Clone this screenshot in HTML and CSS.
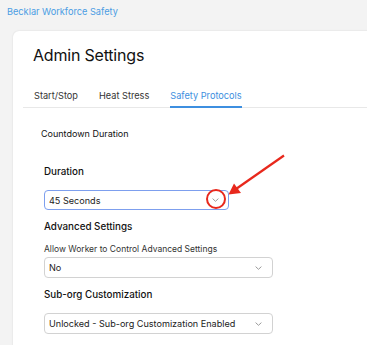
FILE: index.html
```html
<!DOCTYPE html>
<html>
<head>
<meta charset="utf-8">
<link rel="stylesheet" href="styles.css">
</head>
<body>
<div class="app">
  <header class="brand">Becklar Workforce Safety</header>
  <main class="card">
    <h1 class="title">Admin Settings</h1>
    <nav class="tabs">
      <span class="tab">Start/Stop</span>
      <span class="tab">Heat Stress</span>
      <span class="tab active">Safety Protocols</span>
    </nav>
    <section class="panel">
      <div class="section-title">Countdown Duration</div>
      <div class="form">
        <div class="label-lg">Duration</div>
        <div class="select focused short">
          <span>45 Seconds</span>
          <svg class="chev" width="7" height="4" viewBox="0 0 7 4"><path d="M0.6 0.6 L3.5 3.3 L6.4 0.6" fill="none" stroke="#9a9a9a" stroke-width="1"/></svg>
          <span class="ring"></span>
        </div>
        <div class="label-lg g10">Advanced Settings</div>
        <div class="label-sm">Allow Worker to Control Advanced Settings</div>
        <div class="select g2">
          <span>No</span>
          <svg class="chev" width="7" height="4" viewBox="0 0 7 4"><path d="M0.6 0.6 L3.5 3.3 L6.4 0.6" fill="none" stroke="#9a9a9a" stroke-width="1"/></svg>
        </div>
        <div class="label-lg g10">Sub-org Customization</div>
        <div class="select g11">
          <span>Unlocked - Sub-org Customization Enabled</span>
          <svg class="chev" width="7" height="4" viewBox="0 0 7 4"><path d="M0.6 0.6 L3.5 3.3 L6.4 0.6" fill="none" stroke="#9a9a9a" stroke-width="1"/></svg>
        </div>
      </div>
    </section>
  </main>
  <svg class="arrow" width="367" height="345" viewBox="0 0 367 345">
    <line x1="284" y1="155.5" x2="236" y2="189" stroke="#e8281c" stroke-width="2.2"/>
    <polygon points="228.5,194.5 234,183.5 241,193" fill="#e8281c"/>
  </svg>
</div>
</body>
</html>
```
FILE: styles.css
```css
* { box-sizing: border-box; }
html, body { margin: 0; padding: 0; }
body {
  background: #f3f3f3;
  font-family: Inter, "Noto Sans", sans-serif;
  color: #1a1a1a;
  width: 367px;
  height: 345px;
  overflow: hidden;
}
.app { position: relative; width: 367px; height: 345px; }
.brand {
  color: #4b9de3;
  font-size: 9.2px;
  padding: 6px 0 0 7px;
  height: 31px;
  line-height: 12px;
}
.card {
  margin-left: 13px;
  width: 420px;
  height: 340px;
  background: #fff;
  border-radius: 6px;
  box-shadow: 0 0 2px rgba(0,0,0,0.12);
  padding: 14px 0 0 10px;
}
.title {
  margin: 0 0 0 10px;
  font-size: 16px;
  font-weight: 400;
  letter-spacing: -0.2px;
  line-height: 20px;
  color: #111;
}
.tabs {
  display: flex;
  gap: 21px;
  margin-top: 25px;
  padding-left: 11px;
  border-bottom: 1px solid #e8e8e8;
  font-size: 9.2px;
  color: #333;
}
.tab { padding-bottom: 4px; line-height: 12px; border-bottom: 2px solid transparent; margin-bottom: -1px; }
.tab.active {
  color: #3d8fe0;
  border-bottom-color: #3d8fe0;
}
.panel { padding: 20px 0 0 18px; }
.section-title { font-size: 9px; line-height: 12px; color: #111; }
.form { padding: 25px 0 0 3px; }
.label-lg { font-size: 9.8px; font-weight: 500; line-height: 14px; color: #111; }
.label-sm { font-size: 8.5px; line-height: 11px; color: #333; margin-top: 10px; }
.g10 { margin-top: 10px; }
.g2 { margin-top: 2px; }
.g11 { margin-top: 11px; }
.select {
  position: relative;
  width: 229px;
  height: 21px;
  border: 1px solid #d2d2d2;
  border-radius: 4px;
  display: flex;
  align-items: center;
  justify-content: space-between;
  padding: 0 10px 0 4px;
  font-size: 9.1px;
  color: #222;
}
.select.short { width: 185px; height: 20px; margin-top: 11px; padding-right: 9px; }
.select.focused { border: 1.5px solid #7d9fee; }
.chev { display: block; }
.ring {
  position: absolute;
  right: 2.5px;
  top: -2.5px;
  width: 20px;
  height: 20px;
  border: 2px solid #e8281c;
  border-radius: 50%;
}
.arrow { position: absolute; left: 0; top: 0; pointer-events: none; }
```
